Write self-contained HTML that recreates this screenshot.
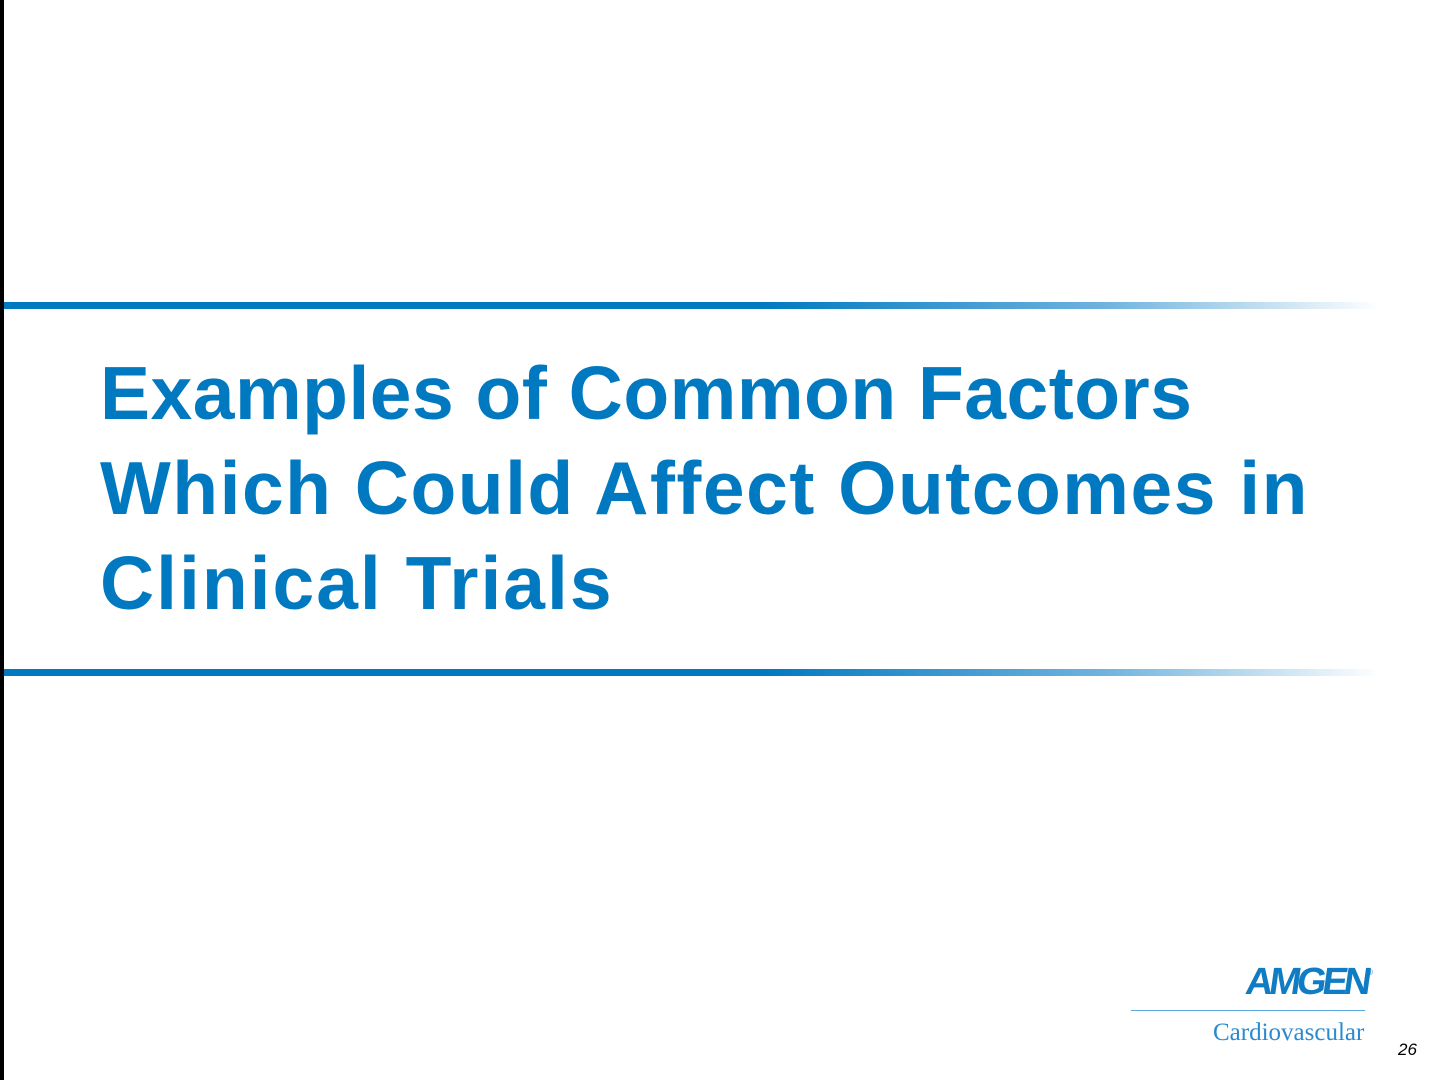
<!DOCTYPE html>
<html><head><style>
html,body{margin:0;padding:0}
body{width:1443px;height:1080px;position:relative;background:#fff;overflow:hidden;font-family:"Liberation Sans",Arial,sans-serif}
.lb{position:absolute;left:0;top:0;width:4px;height:1080px;background:#000}
.ln{position:absolute;left:4px;width:1376px;height:7px;background:linear-gradient(to right,#0079c1 0%,#0079c1 55%,#6fb3de 80%,#fff 100%)}
.t{position:absolute;left:100px;top:346px;font-weight:bold;font-size:75px;line-height:95px;color:#0079c1;white-space:nowrap}
.amg{position:absolute;left:1246px;top:961px;font-weight:bold;font-size:38px;color:#0f7cc4;letter-spacing:-4px;transform:skewX(-8deg)}
.reg{position:absolute;left:1367px;top:968px;font-size:8px;color:#0f7cc4}
.hl{position:absolute;left:1131px;top:1010px;width:234px;height:1px;background:#5aa9de}
.cv{position:absolute;left:1213px;top:1019px;font-family:"Liberation Serif",serif;font-size:25px;color:#2a8ad0}
.pn{position:absolute;left:1398px;top:1040px;font-size:17px;font-style:italic;color:#000}
</style></head><body>
<div class="lb"></div>
<div class="ln" style="top:302px"></div>
<div class="ln" style="top:669px"></div>
<div class="t"><span style="letter-spacing:0.5px">Examples of Common Factors</span><br><span style="letter-spacing:1.5px">Which Could Affect Outcomes in</span><br><span style="letter-spacing:2px">Clinical Trials</span></div>
<div class="amg">AMGEN</div><div class="reg">®</div>
<div class="hl"></div>
<div class="cv">Cardiovascular</div>
<div class="pn">26</div>
</body></html>
